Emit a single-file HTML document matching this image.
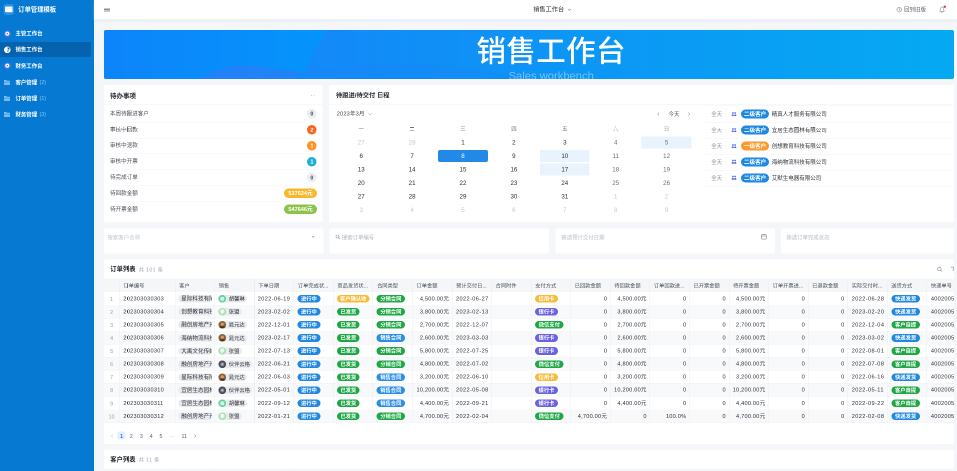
<!DOCTYPE html><html lang="zh-CN"><head><meta charset="utf-8"><title>销售工作台</title><style>
*{box-sizing:border-box;margin:0;padding:0}
html,body{width:957px;height:471px;overflow:hidden;background:#f4f6f9}
body{font-family:"Liberation Sans","Noto Sans CJK SC",sans-serif;color:#2b2f36;position:relative;-webkit-font-smoothing:antialiased}
.a{position:absolute;white-space:nowrap}
.t{position:absolute;white-space:nowrap;line-height:1;transform:translateY(-50%)}
.card{position:absolute;background:#fff;border-radius:2px}
.tag{position:absolute;border-radius:5px;color:#fff;font-weight:700;text-align:center;white-space:nowrap;overflow:hidden}
.b{font-weight:700}
</style></head><body><div style="position:absolute;left:0;top:0;width:1914px;height:942px;transform:scale(0.5);transform-origin:0 0;will-change:transform;overflow:hidden;background:#f4f6f9"><div style="zoom:2;position:absolute;left:0;top:0;width:957px;height:471px">
<div class="a" style="left:0px;top:0px;width:94px;height:471px;background:#067ad3;"></div>
<div class="a" style="left:3.5px;top:4.2px;width:10.6px;height:10.6px;background:#2a90e0;border-radius:2.5px"></div>
<svg class="a" style="left:5px;top:6.6px" width="7.6" height="5.8" viewBox="0 0 76 58"><rect x="0" y="0" width="76" height="58" rx="10" fill="#fff"/><rect x="0" y="12" width="76" height="8" fill="#cfe6fa"/></svg>
<div class="t" style="top:9.6px;font-size:6.3px;color:#fff;left:18.3px;font-weight:700;">订单管理模板</div>
<div class="a" style="left:0px;top:41.8px;width:91px;height:15.4px;background:#0562ae;border-radius:0 2px 2px 0"></div>
<svg class="a" style="left:3.8px;top:30.400000000000002px" width="6.6" height="6.6" viewBox="0 0 66 66"><circle cx="33" cy="33" r="33" fill="#5577f5"/><circle cx="33" cy="31" r="20" fill="#fff"/><circle cx="33" cy="31" r="7" fill="#4f6ff2"/></svg>
<div class="t" style="top:33.7px;font-size:5.4px;color:#fff;left:15.5px;font-weight:700;">主管工作台</div>
<svg class="a" style="left:3.8px;top:46.400000000000006px" width="6.6" height="6.6" viewBox="0 0 66 66"><circle cx="33" cy="33" r="33" fill="#fff"/><path d="M36 30 L36 8 A22 22 0 0 1 58 30 Z" fill="#0b60ab"/><path d="M30 36 L52 36 A22 22 0 0 1 30 58 Z" fill="#7fb3e0"/></svg>
<div class="t" style="top:49.7px;font-size:5.4px;color:#fff;left:15.5px;font-weight:700;">销售工作台</div>
<svg class="a" style="left:3.8px;top:62.7px" width="6.6" height="6.6" viewBox="0 0 66 66"><circle cx="33" cy="33" r="33" fill="#5577f5"/><circle cx="33" cy="31" r="20" fill="#fff"/><circle cx="33" cy="31" r="7" fill="#4f6ff2"/></svg>
<div class="t" style="top:66.0px;font-size:5.4px;color:#fff;left:15.5px;font-weight:700;">财务工作台</div>
<svg class="a" style="left:4px;top:79.80000000000001px" width="6.2" height="5.2" viewBox="0 0 62 52"><path d="M0 4 a4 4 0 0 1 4 -4 h18 l6 8 h30 a4 4 0 0 1 4 4 v6 h-62z" fill="#8fc3ee"/><rect x="0" y="22" width="62" height="30" rx="4" fill="#7db9ea"/></svg>
<div class="t" style="top:82.4px;font-size:5.4px;color:#fff;left:15.5px;font-weight:700;">客户管理</div>
<div class="t" style="top:82.4px;font-size:5.2px;color:#8cc3ee;left:39.6px;">(2)</div>
<svg class="a" style="left:4px;top:95.9px" width="6.2" height="5.2" viewBox="0 0 62 52"><path d="M0 4 a4 4 0 0 1 4 -4 h18 l6 8 h30 a4 4 0 0 1 4 4 v6 h-62z" fill="#8fc3ee"/><rect x="0" y="22" width="62" height="30" rx="4" fill="#7db9ea"/></svg>
<div class="t" style="top:98.5px;font-size:5.4px;color:#fff;left:15.5px;font-weight:700;">订单管理</div>
<div class="t" style="top:98.5px;font-size:5.2px;color:#8cc3ee;left:39.6px;">(1)</div>
<svg class="a" style="left:4px;top:112.0px" width="6.2" height="5.2" viewBox="0 0 62 52"><path d="M0 4 a4 4 0 0 1 4 -4 h18 l6 8 h30 a4 4 0 0 1 4 4 v6 h-62z" fill="#8fc3ee"/><rect x="0" y="22" width="62" height="30" rx="4" fill="#7db9ea"/></svg>
<div class="t" style="top:114.6px;font-size:5.4px;color:#fff;left:15.5px;font-weight:700;">财务管理</div>
<div class="t" style="top:114.6px;font-size:5.2px;color:#8cc3ee;left:39.6px;">(3)</div>
<div class="a" style="left:94px;top:0px;width:863px;height:19.5px;background:#fff;box-shadow:0 1px 2px rgba(200,215,230,.5)"></div>
<div class="a" style="left:104px;top:7.8px;width:5.8px;height:0.9px;background:#8a8f98;"></div>
<div class="a" style="left:104px;top:9.2px;width:5.8px;height:0.9px;background:#8a8f98;"></div>
<div class="a" style="left:104px;top:10.6px;width:5.8px;height:0.9px;background:#8a8f98;"></div>
<div class="t" style="top:9.7px;font-size:6.2px;color:#2b2f36;left:533.2px;">销售工作台</div>
<svg class="a" style="left:567.5px;top:8.6px" width="4" height="2.6" viewBox="0 0 40 26"><path d="M4 4 L20 20 L36 4" stroke="#8a8f98" stroke-width="6" fill="none"/></svg>
<svg class="a" style="left:896.5px;top:6.9px" width="5.4" height="5.4" viewBox="0 0 54 54"><circle cx="27" cy="27" r="23" stroke="#5a5f68" stroke-width="5" fill="none"/><path d="M27 12 V28 L37 34" stroke="#5a5f68" stroke-width="5" fill="none"/></svg>
<div class="t" style="top:9.6px;font-size:5.5px;color:#5a5f68;left:904px;">回到旧版</div>
<svg class="a" style="left:938.5px;top:5.8px" width="7" height="7.6" viewBox="0 0 70 76"><path d="M12 56 C18 48 16 36 18 28 C20 16 27 10 35 10 C43 10 50 16 52 28 C54 36 52 48 58 56 Z" stroke="#70757e" stroke-width="5" fill="none" stroke-linejoin="round"/><path d="M28 66 H42" stroke="#70757e" stroke-width="5"/></svg>
<div class="a" style="left:943.4px;top:5.4px;width:2.4px;height:2.4px;background:#f03a3a;border-radius:50%"></div>
<div class="a" style="left:104px;top:29.8px;width:850px;height:49.2px;border-radius:2px;overflow:hidden;background:linear-gradient(90deg,#1389f8 0%,#1389f8 24%,#0b98f5 60%,#05a9f2 100%)"><svg class="a" style="left:0;top:0" width="850" height="49.2" viewBox="0 0 850 49.2"><defs><linearGradient id="lg1" x1="0" x2="1"><stop offset="0" stop-color="#0d84fa"/><stop offset="1" stop-color="#0494fb"/></linearGradient></defs><path d="M0 0 H222 L196 49.2 H0 Z" fill="url(#lg1)"/><path d="M93 49.2 C110 40 125 35.5 140 35.5 C160 35.5 175 41 196 41 L192 49.2 Z" fill="#2b7df3" opacity=".7"/><path d="M196 41 C240 41 300 20 420 49.2 L192 49.2 Z" fill="#1c86f6" opacity=".3"/></svg><div class="a" style="left:447.2px;top:40.8px;width:200px;margin-left:-100px;text-align:center;font-size:11.2px;line-height:1;color:rgba(255,255,255,.42)">Sales workbench</div></div>
<div class="t" style="top:51.3px;font-size:29.5px;color:#fff;left:0px;left:451.2px;width:200px;text-align:center;font-weight:500;letter-spacing:0.4px;">销售工作台</div>
<div class="card" style="left:103.8px;top:85px;width:218.8px;height:137px"></div>
<div class="t" style="top:95.5px;font-size:6.5px;color:#23272e;left:110px;font-weight:700;">待办事项</div>
<div class="a" style="left:311.2px;top:94.8px;width:0.8px;height:0.8px;background:#8a8f98;border-radius:50%"></div>
<div class="a" style="left:312.8px;top:94.8px;width:0.8px;height:0.8px;background:#8a8f98;border-radius:50%"></div>
<div class="a" style="left:314.4px;top:94.8px;width:0.8px;height:0.8px;background:#8a8f98;border-radius:50%"></div>
<div class="a" style="left:103.8px;top:103.8px;width:218.8px;height:0.5px;background:#eef0f3;"></div>
<div class="t" style="top:113.9px;font-size:5.55px;color:#4a4f58;left:110px;">本周待跟进客户</div>
<div class="a" style="left:110px;top:121.9px;width:206px;height:0.4px;background:#f3f4f6;"></div>
<div class="tag" style="left:307.2px;top:109.2px;width:9.4px;height:9.4px;line-height:9.4px;border-radius:50%;background:#eef0f3;color:#3a3f48;font-size:5.4px;border:0.5px solid #e0e3e8;line-height:8.4px">0</div>
<div class="t" style="top:129.8px;font-size:5.55px;color:#4a4f58;left:110px;">审核中回款</div>
<div class="a" style="left:110px;top:137.8px;width:206px;height:0.4px;background:#f3f4f6;"></div>
<div class="tag" style="left:307.2px;top:125.10000000000001px;width:9.4px;height:9.4px;line-height:9.4px;border-radius:50%;background:#f26a1e;font-size:5.6px">2</div>
<div class="t" style="top:145.70000000000002px;font-size:5.55px;color:#4a4f58;left:110px;">审核中退款</div>
<div class="a" style="left:110px;top:153.70000000000002px;width:206px;height:0.4px;background:#f3f4f6;"></div>
<div class="tag" style="left:307.2px;top:141.00000000000003px;width:9.4px;height:9.4px;line-height:9.4px;border-radius:50%;background:#ff9220;font-size:5.6px">1</div>
<div class="t" style="top:161.60000000000002px;font-size:5.55px;color:#4a4f58;left:110px;">审核中开票</div>
<div class="a" style="left:110px;top:169.60000000000002px;width:206px;height:0.4px;background:#f3f4f6;"></div>
<div class="tag" style="left:307.2px;top:156.90000000000003px;width:9.4px;height:9.4px;line-height:9.4px;border-radius:50%;background:#1fb0d9;font-size:5.6px">1</div>
<div class="t" style="top:177.5px;font-size:5.55px;color:#4a4f58;left:110px;">待完成订单</div>
<div class="a" style="left:110px;top:185.5px;width:206px;height:0.4px;background:#f3f4f6;"></div>
<div class="tag" style="left:307.2px;top:172.8px;width:9.4px;height:9.4px;line-height:9.4px;border-radius:50%;background:#eef0f3;color:#3a3f48;font-size:5.4px;border:0.5px solid #e0e3e8;line-height:8.4px">0</div>
<div class="t" style="top:193.4px;font-size:5.55px;color:#4a4f58;left:110px;">待回款金额</div>
<div class="a" style="left:110px;top:201.4px;width:206px;height:0.4px;background:#f3f4f6;"></div>
<div class="tag" style="left:284px;top:188.70000000000002px;width:33px;height:9.4px;line-height:9.4px;background:#f9b72d;font-size:5.6px;color:#fff;">537624元</div>
<div class="t" style="top:209.3px;font-size:5.55px;color:#4a4f58;left:110px;">待开票金额</div>
<div class="tag" style="left:284px;top:204.60000000000002px;width:33px;height:9.4px;line-height:9.4px;background:#8cc34a;font-size:5.6px;color:#fff;">547646元</div>
<div class="card" style="left:329.2px;top:85px;width:624.8px;height:137px"></div>
<div class="t" style="top:95.5px;font-size:6.25px;color:#23272e;left:336px;font-weight:700;">待跟进/待交付 日程</div>
<div class="a" style="left:329.2px;top:103.8px;width:624.8px;height:0.5px;background:#eef0f3;"></div>
<div class="t" style="top:114px;font-size:5.6px;color:#3a3f48;left:336.8px;letter-spacing:0.15px;">2023年3月</div>
<svg class="a" style="left:368px;top:113px" width="4" height="2.6" viewBox="0 0 40 26"><path d="M4 4 L20 20 L36 4" stroke="#8a8f98" stroke-width="5" fill="none"/></svg>
<svg class="a" style="left:657.2px;top:112px" width="2.4" height="4" viewBox="0 0 24 40"><path d="M20 4 L6 20 L20 36" stroke="#6a6f78" stroke-width="5" fill="none"/></svg>
<div class="t" style="top:114px;font-size:5.5px;color:#4a4f58;left:668.5px;">今天</div>
<svg class="a" style="left:688.2px;top:112px" width="2.4" height="4" viewBox="0 0 24 40"><path d="M4 4 L18 20 L4 36" stroke="#6a6f78" stroke-width="5" fill="none"/></svg>
<div class="t" style="top:128.8px;font-size:5.4px;color:#6a6f78;left:0px;left:351.2px;width:20px;text-align:center;">一</div>
<div class="t" style="top:128.8px;font-size:5.4px;color:#6a6f78;left:0px;left:402.09999999999997px;width:20px;text-align:center;">二</div>
<div class="t" style="top:128.8px;font-size:5.4px;color:#6a6f78;left:0px;left:453.0px;width:20px;text-align:center;">三</div>
<div class="t" style="top:128.8px;font-size:5.4px;color:#6a6f78;left:0px;left:503.9px;width:20px;text-align:center;">四</div>
<div class="t" style="top:128.8px;font-size:5.4px;color:#6a6f78;left:0px;left:554.8px;width:20px;text-align:center;">五</div>
<div class="t" style="top:128.8px;font-size:5.4px;color:#9aa0a8;left:0px;left:605.7px;width:20px;text-align:center;">六</div>
<div class="t" style="top:128.8px;font-size:5.4px;color:#9aa0a8;left:0px;left:656.5999999999999px;width:20px;text-align:center;">日</div>
<div class="t" style="top:142.5px;font-size:6.2px;color:#c4c8ce;left:0px;left:351.2px;width:20px;text-align:center;">27</div>
<div class="t" style="top:142.5px;font-size:6.2px;color:#c4c8ce;left:0px;left:402.09999999999997px;width:20px;text-align:center;">28</div>
<div class="t" style="top:142.5px;font-size:6.2px;color:#2b2f36;left:0px;left:453.0px;width:20px;text-align:center;">1</div>
<div class="t" style="top:142.5px;font-size:6.2px;color:#2b2f36;left:0px;left:503.9px;width:20px;text-align:center;">2</div>
<div class="t" style="top:142.5px;font-size:6.2px;color:#2b2f36;left:0px;left:554.8px;width:20px;text-align:center;">3</div>
<div class="t" style="top:142.5px;font-size:6.2px;color:#6a6f78;left:0px;left:605.7px;width:20px;text-align:center;">4</div>
<div class="a" style="left:641.6999999999999px;top:136.5px;width:49.8px;height:12px;background:#e8f3fd;border-radius:1px"></div>
<div class="t" style="top:142.5px;font-size:6.2px;color:#6a6f78;left:0px;left:656.5999999999999px;width:20px;text-align:center;">5</div>
<div class="t" style="top:156.0px;font-size:6.2px;color:#2b2f36;left:0px;left:351.2px;width:20px;text-align:center;">6</div>
<div class="t" style="top:156.0px;font-size:6.2px;color:#2b2f36;left:0px;left:402.09999999999997px;width:20px;text-align:center;">7</div>
<div class="a" style="left:438.1px;top:149.9px;width:49.8px;height:12.2px;background:#2289e6;border-radius:2px"></div>
<div class="t" style="top:156.0px;font-size:6.2px;color:#fff;left:0px;left:453.0px;width:20px;text-align:center;">8</div>
<div class="t" style="top:156.0px;font-size:6.2px;color:#2b2f36;left:0px;left:503.9px;width:20px;text-align:center;">9</div>
<div class="a" style="left:539.9px;top:150.0px;width:49.8px;height:12px;background:#e8f3fd;border-radius:1px"></div>
<div class="t" style="top:156.0px;font-size:6.2px;color:#2b2f36;left:0px;left:554.8px;width:20px;text-align:center;">10</div>
<div class="t" style="top:156.0px;font-size:6.2px;color:#6a6f78;left:0px;left:605.7px;width:20px;text-align:center;">11</div>
<div class="t" style="top:156.0px;font-size:6.2px;color:#6a6f78;left:0px;left:656.5999999999999px;width:20px;text-align:center;">12</div>
<div class="t" style="top:169.5px;font-size:6.2px;color:#2b2f36;left:0px;left:351.2px;width:20px;text-align:center;">13</div>
<div class="t" style="top:169.5px;font-size:6.2px;color:#2b2f36;left:0px;left:402.09999999999997px;width:20px;text-align:center;">14</div>
<div class="t" style="top:169.5px;font-size:6.2px;color:#2b2f36;left:0px;left:453.0px;width:20px;text-align:center;">15</div>
<div class="t" style="top:169.5px;font-size:6.2px;color:#2b2f36;left:0px;left:503.9px;width:20px;text-align:center;">16</div>
<div class="a" style="left:539.9px;top:163.5px;width:49.8px;height:12px;background:#e8f3fd;border-radius:1px"></div>
<div class="t" style="top:169.5px;font-size:6.2px;color:#2b2f36;left:0px;left:554.8px;width:20px;text-align:center;">17</div>
<div class="t" style="top:169.5px;font-size:6.2px;color:#6a6f78;left:0px;left:605.7px;width:20px;text-align:center;">18</div>
<div class="t" style="top:169.5px;font-size:6.2px;color:#6a6f78;left:0px;left:656.5999999999999px;width:20px;text-align:center;">19</div>
<div class="t" style="top:183.0px;font-size:6.2px;color:#2b2f36;left:0px;left:351.2px;width:20px;text-align:center;">20</div>
<div class="t" style="top:183.0px;font-size:6.2px;color:#2b2f36;left:0px;left:402.09999999999997px;width:20px;text-align:center;">21</div>
<div class="t" style="top:183.0px;font-size:6.2px;color:#2b2f36;left:0px;left:453.0px;width:20px;text-align:center;">22</div>
<div class="t" style="top:183.0px;font-size:6.2px;color:#2b2f36;left:0px;left:503.9px;width:20px;text-align:center;">23</div>
<div class="t" style="top:183.0px;font-size:6.2px;color:#2b2f36;left:0px;left:554.8px;width:20px;text-align:center;">24</div>
<div class="t" style="top:183.0px;font-size:6.2px;color:#6a6f78;left:0px;left:605.7px;width:20px;text-align:center;">25</div>
<div class="t" style="top:183.0px;font-size:6.2px;color:#6a6f78;left:0px;left:656.5999999999999px;width:20px;text-align:center;">26</div>
<div class="t" style="top:196.5px;font-size:6.2px;color:#2b2f36;left:0px;left:351.2px;width:20px;text-align:center;">27</div>
<div class="t" style="top:196.5px;font-size:6.2px;color:#2b2f36;left:0px;left:402.09999999999997px;width:20px;text-align:center;">28</div>
<div class="t" style="top:196.5px;font-size:6.2px;color:#2b2f36;left:0px;left:453.0px;width:20px;text-align:center;">29</div>
<div class="t" style="top:196.5px;font-size:6.2px;color:#2b2f36;left:0px;left:503.9px;width:20px;text-align:center;">30</div>
<div class="t" style="top:196.5px;font-size:6.2px;color:#2b2f36;left:0px;left:554.8px;width:20px;text-align:center;">31</div>
<div class="t" style="top:196.5px;font-size:6.2px;color:#c4c8ce;left:0px;left:605.7px;width:20px;text-align:center;">1</div>
<div class="t" style="top:196.5px;font-size:6.2px;color:#c4c8ce;left:0px;left:656.5999999999999px;width:20px;text-align:center;">2</div>
<div class="t" style="top:210.0px;font-size:6.2px;color:#c4c8ce;left:0px;left:351.2px;width:20px;text-align:center;">3</div>
<div class="t" style="top:210.0px;font-size:6.2px;color:#c4c8ce;left:0px;left:402.09999999999997px;width:20px;text-align:center;">4</div>
<div class="t" style="top:210.0px;font-size:6.2px;color:#c4c8ce;left:0px;left:453.0px;width:20px;text-align:center;">5</div>
<div class="t" style="top:210.0px;font-size:6.2px;color:#c4c8ce;left:0px;left:503.9px;width:20px;text-align:center;">6</div>
<div class="t" style="top:210.0px;font-size:6.2px;color:#c4c8ce;left:0px;left:554.8px;width:20px;text-align:center;">7</div>
<div class="t" style="top:210.0px;font-size:6.2px;color:#c4c8ce;left:0px;left:605.7px;width:20px;text-align:center;">8</div>
<div class="t" style="top:210.0px;font-size:6.2px;color:#c4c8ce;left:0px;left:656.5999999999999px;width:20px;text-align:center;">9</div>
<div class="a" style="left:705.5px;top:105.2px;width:246.5px;height:0.5px;background:#f0f2f4;"></div>
<div class="t" style="top:114.1px;font-size:5.4px;color:#8a8f98;left:711.2px;">全天</div>
<svg class="a" style="left:731.3px;top:111.89999999999999px" width="5" height="4.2" viewBox="0 0 50 42"><circle cx="14" cy="10" r="8.5" fill="#4468e0"/><circle cx="36" cy="10" r="8.5" fill="#4468e0"/><path d="M1 42 C1 30 6 24 14 24 C20 24 23 28 23.5 42 Z M26.5 42 C27 28 30 24 36 24 C44 24 49 30 49 42 Z" fill="#4468e0"/></svg>
<div class="tag" style="left:741.2px;top:109.6px;width:27.8px;height:9px;line-height:9px;background:#1e88e5;font-size:5.6px;color:#fff;">二级客户</div>
<div class="t" style="top:114.1px;font-size:5.5px;color:#2b2f36;left:771.8px;">精真人才服务有限公司</div>
<div class="a" style="left:705.5px;top:122.1px;width:246.5px;height:0.5px;background:#f0f2f4;"></div>
<div class="t" style="top:130.03px;font-size:5.4px;color:#8a8f98;left:711.2px;">全天</div>
<svg class="a" style="left:731.3px;top:127.83px" width="5" height="4.2" viewBox="0 0 50 42"><circle cx="14" cy="10" r="8.5" fill="#4468e0"/><circle cx="36" cy="10" r="8.5" fill="#4468e0"/><path d="M1 42 C1 30 6 24 14 24 C20 24 23 28 23.5 42 Z M26.5 42 C27 28 30 24 36 24 C44 24 49 30 49 42 Z" fill="#4468e0"/></svg>
<div class="tag" style="left:741.2px;top:125.53px;width:27.8px;height:9px;line-height:9px;background:#1e88e5;font-size:5.6px;color:#fff;">二级客户</div>
<div class="t" style="top:130.03px;font-size:5.5px;color:#2b2f36;left:771.8px;">宜居生态园林有限公司</div>
<div class="a" style="left:705.5px;top:138.03px;width:246.5px;height:0.5px;background:#f0f2f4;"></div>
<div class="t" style="top:145.95999999999998px;font-size:5.4px;color:#8a8f98;left:711.2px;">全天</div>
<svg class="a" style="left:731.3px;top:143.76px" width="5" height="4.2" viewBox="0 0 50 42"><circle cx="14" cy="10" r="8.5" fill="#4468e0"/><circle cx="36" cy="10" r="8.5" fill="#4468e0"/><path d="M1 42 C1 30 6 24 14 24 C20 24 23 28 23.5 42 Z M26.5 42 C27 28 30 24 36 24 C44 24 49 30 49 42 Z" fill="#4468e0"/></svg>
<div class="tag" style="left:741.2px;top:141.45999999999998px;width:27.8px;height:9px;line-height:9px;background:#ff972b;font-size:5.6px;color:#fff;">一级客户</div>
<div class="t" style="top:145.95999999999998px;font-size:5.5px;color:#2b2f36;left:771.8px;">创想教育科技有限公司</div>
<div class="a" style="left:705.5px;top:153.95999999999998px;width:246.5px;height:0.5px;background:#f0f2f4;"></div>
<div class="t" style="top:161.89px;font-size:5.4px;color:#8a8f98;left:711.2px;">全天</div>
<svg class="a" style="left:731.3px;top:159.69px" width="5" height="4.2" viewBox="0 0 50 42"><circle cx="14" cy="10" r="8.5" fill="#4468e0"/><circle cx="36" cy="10" r="8.5" fill="#4468e0"/><path d="M1 42 C1 30 6 24 14 24 C20 24 23 28 23.5 42 Z M26.5 42 C27 28 30 24 36 24 C44 24 49 30 49 42 Z" fill="#4468e0"/></svg>
<div class="tag" style="left:741.2px;top:157.39px;width:27.8px;height:9px;line-height:9px;background:#1e88e5;font-size:5.6px;color:#fff;">二级客户</div>
<div class="t" style="top:161.89px;font-size:5.5px;color:#2b2f36;left:771.8px;">海纳物流科技有限公司</div>
<div class="a" style="left:705.5px;top:169.89px;width:246.5px;height:0.5px;background:#f0f2f4;"></div>
<div class="t" style="top:177.82px;font-size:5.4px;color:#8a8f98;left:711.2px;">全天</div>
<svg class="a" style="left:731.3px;top:175.62px" width="5" height="4.2" viewBox="0 0 50 42"><circle cx="14" cy="10" r="8.5" fill="#4468e0"/><circle cx="36" cy="10" r="8.5" fill="#4468e0"/><path d="M1 42 C1 30 6 24 14 24 C20 24 23 28 23.5 42 Z M26.5 42 C27 28 30 24 36 24 C44 24 49 30 49 42 Z" fill="#4468e0"/></svg>
<div class="tag" style="left:741.2px;top:173.32px;width:27.8px;height:9px;line-height:9px;background:#1e88e5;font-size:5.6px;color:#fff;">二级客户</div>
<div class="t" style="top:177.82px;font-size:5.5px;color:#2b2f36;left:771.8px;">艾默生电器有限公司</div>
<div class="a" style="left:705.5px;top:185.82px;width:246.5px;height:0.5px;background:#f0f2f4;"></div>
<div class="card" style="left:103.8px;top:228.3px;width:219.6px;height:25px"></div>
<div class="card" style="left:329.4px;top:228.3px;width:219.6px;height:25px"></div>
<div class="card" style="left:555.3px;top:228.3px;width:219.6px;height:25px"></div>
<div class="card" style="left:780.9px;top:228.3px;width:173.1px;height:25px"></div>
<div class="t" style="top:237.3px;font-size:5.5px;color:#c4c8ce;left:107.3px;">搜索客户名称</div>
<svg class="a" style="left:311.6px;top:236px" width="3.4" height="2.2" viewBox="0 0 34 22"><path d="M2 2 L17 18 L32 2 Z" fill="#9aa0a8"/></svg>
<svg class="a" style="left:335.5px;top:234.3px" width="5" height="5" viewBox="0 0 50 50"><circle cx="20" cy="20" r="15" stroke="#9aa0a8" stroke-width="6" fill="none"/><path d="M31 31 L46 46" stroke="#9aa0a8" stroke-width="7"/></svg>
<div class="t" style="top:237.3px;font-size:5.4px;color:#b4b9c0;left:341.8px;">搜索订单编号</div>
<div class="t" style="top:237.3px;font-size:5.4px;color:#b8bcc3;left:561.3px;">筛选预计交付日期</div>
<svg class="a" style="left:761.2px;top:234px" width="5.6" height="5.4" viewBox="0 0 56 54"><rect x="3" y="6" width="50" height="45" rx="6" stroke="#6a6f78" stroke-width="5" fill="none"/><path d="M3 20 H53" stroke="#6a6f78" stroke-width="5"/><path d="M16 0 V10 M40 0 V10" stroke="#6a6f78" stroke-width="5"/></svg>
<div class="t" style="top:237.3px;font-size:5.4px;color:#b8bcc3;left:786.3px;">筛选订单完成状态</div>
<div class="card" style="left:103.8px;top:259.6px;width:850.2px;height:184.4px"></div>
<div class="t" style="top:269.2px;font-size:6.3px;color:#23272e;left:110.3px;font-weight:700;">订单列表</div>
<div class="t" style="top:269.3px;font-size:5.3px;color:#a0a5ad;left:138.6px;letter-spacing:0.35px;">共 101 条</div>
<svg class="a" style="left:937px;top:266.3px" width="5.6" height="5.6" viewBox="0 0 56 56"><circle cx="24" cy="24" r="18" stroke="#5a5f68" stroke-width="5" fill="none"/><path d="M37 37 L52 52" stroke="#5a5f68" stroke-width="5"/></svg>
<svg class="a" style="left:950.5px;top:266.3px" width="3.5" height="5.6" viewBox="0 0 35 56"><path d="M4 6 H40 L26 26 V46" stroke="#5a5f68" stroke-width="5" fill="none"/></svg>
<div class="a" style="left:103.8px;top:278.6px;width:850.2px;height:165.4px;overflow:hidden">
<div class="a" style="left:0.0px;top:0.0px;width:850.2px;height:13.4px;background:#f5f6f8;"></div>
<div class="a" style="left:0.0px;top:26.20999999999998px;width:850.2px;height:0.5px;background:#eef0f3;"></div>
<div class="a" style="left:0.0px;top:26.45999999999998px;width:850.2px;height:13.06px;background:#f8f9fa;"></div>
<div class="a" style="left:0.0px;top:39.26999999999998px;width:850.2px;height:0.5px;background:#eef0f3;"></div>
<div class="a" style="left:0.0px;top:52.329999999999984px;width:850.2px;height:0.5px;background:#eef0f3;"></div>
<div class="a" style="left:0.0px;top:52.579999999999984px;width:850.2px;height:13.06px;background:#f8f9fa;"></div>
<div class="a" style="left:0.0px;top:65.38999999999999px;width:850.2px;height:0.5px;background:#eef0f3;"></div>
<div class="a" style="left:0.0px;top:78.44999999999999px;width:850.2px;height:0.5px;background:#eef0f3;"></div>
<div class="a" style="left:0.0px;top:78.69999999999999px;width:850.2px;height:13.06px;background:#f8f9fa;"></div>
<div class="a" style="left:0.0px;top:91.50999999999999px;width:850.2px;height:0.5px;background:#eef0f3;"></div>
<div class="a" style="left:0.0px;top:104.57px;width:850.2px;height:0.5px;background:#eef0f3;"></div>
<div class="a" style="left:0.0px;top:104.82px;width:850.2px;height:13.06px;background:#f8f9fa;"></div>
<div class="a" style="left:0.0px;top:117.63px;width:850.2px;height:0.5px;background:#eef0f3;"></div>
<div class="a" style="left:0.0px;top:130.69px;width:850.2px;height:0.5px;background:#eef0f3;"></div>
<div class="a" style="left:0.0px;top:130.94px;width:850.2px;height:13.06px;background:#f8f9fa;"></div>
<div class="a" style="left:0.0px;top:143.75px;width:850.2px;height:0.5px;background:#eef0f3;"></div>
<div class="a" style="left:15.350000000000009px;top:0.0px;width:0.5px;height:144.4px;background:#eceef1;"></div>
<div class="a" style="left:71.14999999999999px;top:0.0px;width:0.5px;height:144.4px;background:#eceef1;"></div>
<div class="a" style="left:110.71px;top:0.0px;width:0.5px;height:144.4px;background:#eceef1;"></div>
<div class="a" style="left:150.26999999999998px;top:0.0px;width:0.5px;height:144.4px;background:#eceef1;"></div>
<div class="a" style="left:189.82999999999998px;top:0.0px;width:0.5px;height:144.4px;background:#eceef1;"></div>
<div class="a" style="left:229.39px;top:0.0px;width:0.5px;height:144.4px;background:#eceef1;"></div>
<div class="a" style="left:268.95px;top:0.0px;width:0.5px;height:144.4px;background:#eceef1;"></div>
<div class="a" style="left:308.51px;top:0.0px;width:0.5px;height:144.4px;background:#eceef1;"></div>
<div class="a" style="left:348.07px;top:0.0px;width:0.5px;height:144.4px;background:#eceef1;"></div>
<div class="a" style="left:387.63px;top:0.0px;width:0.5px;height:144.4px;background:#eceef1;"></div>
<div class="a" style="left:427.19px;top:0.0px;width:0.5px;height:144.4px;background:#eceef1;"></div>
<div class="a" style="left:466.74999999999994px;top:0.0px;width:0.5px;height:144.4px;background:#eceef1;"></div>
<div class="a" style="left:506.31px;top:0.0px;width:0.5px;height:144.4px;background:#eceef1;"></div>
<div class="a" style="left:545.8700000000001px;top:0.0px;width:0.5px;height:144.4px;background:#eceef1;"></div>
<div class="a" style="left:585.4300000000001px;top:0.0px;width:0.5px;height:144.4px;background:#eceef1;"></div>
<div class="a" style="left:624.99px;top:0.0px;width:0.5px;height:144.4px;background:#eceef1;"></div>
<div class="a" style="left:664.5500000000002px;top:0.0px;width:0.5px;height:144.4px;background:#eceef1;"></div>
<div class="a" style="left:704.1100000000001px;top:0.0px;width:0.5px;height:144.4px;background:#eceef1;"></div>
<div class="a" style="left:743.6700000000001px;top:0.0px;width:0.5px;height:144.4px;background:#eceef1;"></div>
<div class="a" style="left:783.23px;top:0.0px;width:0.5px;height:144.4px;background:#eceef1;"></div>
<div class="a" style="left:822.7900000000002px;top:0.0px;width:0.5px;height:144.4px;background:#eceef1;"></div>
<div class="t" style="top:6.899999999999977px;font-size:5.25px;color:#4a4f58;left:19.60000000000001px;">订单编号</div>
<div class="t" style="top:6.899999999999977px;font-size:5.25px;color:#4a4f58;left:75.39999999999999px;">客户</div>
<div class="t" style="top:6.899999999999977px;font-size:5.25px;color:#4a4f58;left:114.96px;">销售</div>
<div class="t" style="top:6.899999999999977px;font-size:5.25px;color:#4a4f58;left:154.51999999999998px;">下单日期</div>
<div class="t" style="top:6.899999999999977px;font-size:5.25px;color:#4a4f58;left:194.07999999999998px;">订单完成状...</div>
<div class="t" style="top:6.899999999999977px;font-size:5.25px;color:#4a4f58;left:233.64px;">商品发货状...</div>
<div class="t" style="top:6.899999999999977px;font-size:5.25px;color:#4a4f58;left:273.2px;">合同类型</div>
<div class="t" style="top:6.899999999999977px;font-size:5.25px;color:#4a4f58;left:312.76px;">订单金额</div>
<div class="t" style="top:6.899999999999977px;font-size:5.25px;color:#4a4f58;left:352.32px;">预计交付日...</div>
<div class="t" style="top:6.899999999999977px;font-size:5.25px;color:#4a4f58;left:391.88px;">合同附件</div>
<div class="t" style="top:6.899999999999977px;font-size:5.25px;color:#4a4f58;left:431.44px;">支付方式</div>
<div class="t" style="top:6.899999999999977px;font-size:5.25px;color:#4a4f58;left:470.99999999999994px;">已回款金额</div>
<div class="t" style="top:6.899999999999977px;font-size:5.25px;color:#4a4f58;left:510.56px;">待回款金额</div>
<div class="t" style="top:6.899999999999977px;font-size:5.25px;color:#4a4f58;left:550.1200000000001px;">订单回款进...</div>
<div class="t" style="top:6.899999999999977px;font-size:5.25px;color:#4a4f58;left:589.6800000000001px;">已开票金额</div>
<div class="t" style="top:6.899999999999977px;font-size:5.25px;color:#4a4f58;left:629.24px;">待开票金额</div>
<div class="t" style="top:6.899999999999977px;font-size:5.25px;color:#4a4f58;left:668.8000000000002px;">订单开票进...</div>
<div class="t" style="top:6.899999999999977px;font-size:5.25px;color:#4a4f58;left:708.3600000000001px;">已退款金额</div>
<div class="t" style="top:6.899999999999977px;font-size:5.25px;color:#4a4f58;left:747.9200000000001px;">实际交付时...</div>
<div class="t" style="top:6.899999999999977px;font-size:5.25px;color:#4a4f58;left:787.48px;">送货方式</div>
<div class="t" style="top:6.899999999999977px;font-size:5.25px;color:#4a4f58;left:827.0400000000002px;">快递单号</div>
<div class="t" style="top:20.19999999999999px;font-size:5.3px;color:#9aa0a8;left:-103.8px;left:-0.20000000000000284px;width:16px;text-align:center;">1</div>
<div class="t" style="top:20.19999999999999px;font-size:5.6px;color:#2b2f36;left:19.60000000000001px;letter-spacing:0.27px;">202303030303</div>
<div class="tag" style="left:74.60000000000001px;top:16.5px;width:33.6px;height:7.4px;line-height:7.4px;background:#e9ebee;color:#2b2f36;font-weight:400;font-size:5.6px;border-radius:3px;text-align:left;padding-left:2.8px">星际科技有限</div>
<div class="tag" style="left:114.2px;top:16.5px;width:29px;height:7.4px;line-height:7.4px;background:#e9ebee;color:#2b2f36;font-weight:400;font-size:5.3px;border-radius:4px;text-align:left;padding-left:10.8px">胡馨琳</div>
<svg class="a" style="left:114.60000000000001px;top:16.399999999999977px" width="7.6" height="7.6" viewBox="0 0 70 70"><circle cx="35" cy="35" r="35" fill="#5ed39a"/><rect x="17" y="17" width="36" height="36" rx="10" fill="#d4f5e3"/></svg>
<div class="t" style="top:20.19999999999999px;font-size:5.6px;color:#2b2f36;left:153.89999999999998px;letter-spacing:0.4px;">2022-06-19</div>
<div class="tag" style="left:193.5px;top:16.399999999999977px;width:23.2px;height:7.6px;line-height:7.6px;background:#2087e2;font-size:5.3px;color:#fff;">进行中</div>
<div class="tag" style="left:233.2px;top:16.399999999999977px;width:32.5px;height:7.6px;line-height:7.6px;background:#f8ba37;font-size:5.3px;color:#fff;">客户确认收</div>
<div class="tag" style="left:272.7px;top:16.399999999999977px;width:28.6px;height:7.6px;line-height:7.6px;background:#1fa745;font-size:5.3px;color:#fff;">分销合同</div>
<div class="t" style="top:20.19999999999999px;font-size:5.6px;color:#2b2f36;right:504.8px;letter-spacing:0.22px;">4,500.00元</div>
<div class="t" style="top:20.19999999999999px;font-size:5.6px;color:#2b2f36;left:352.2px;letter-spacing:0.4px;">2022-06-27</div>
<div class="tag" style="left:431.2px;top:16.399999999999977px;width:23px;height:7.6px;line-height:7.6px;background:#f8ba37;font-size:5.3px;color:#fff;">信用卡</div>
<div class="t" style="top:20.19999999999999px;font-size:5.6px;color:#2b2f36;right:346.84000000000003px;letter-spacing:0.22px;">0</div>
<div class="t" style="top:20.19999999999999px;font-size:5.6px;color:#2b2f36;right:307.28px;letter-spacing:0.22px;">4,500.00元</div>
<div class="t" style="top:20.19999999999999px;font-size:5.6px;color:#2b2f36;right:267.72px;letter-spacing:0.22px;">0</div>
<div class="t" style="top:20.19999999999999px;font-size:5.6px;color:#2b2f36;right:228.16000000000008px;letter-spacing:0.22px;">0</div>
<div class="t" style="top:20.19999999999999px;font-size:5.6px;color:#2b2f36;right:188.5999999999999px;letter-spacing:0.22px;">4,500.00元</div>
<div class="t" style="top:20.19999999999999px;font-size:5.6px;color:#2b2f36;right:149.03999999999996px;letter-spacing:0.22px;">0</div>
<div class="t" style="top:20.19999999999999px;font-size:5.6px;color:#2b2f36;right:109.48000000000002px;letter-spacing:0.22px;">0</div>
<div class="t" style="top:20.19999999999999px;font-size:5.6px;color:#2b2f36;left:747.9200000000001px;letter-spacing:0.4px;">2022-06-28</div>
<div class="tag" style="left:787.48px;top:16.399999999999977px;width:28.6px;height:7.6px;line-height:7.6px;background:#2087e2;font-size:5.3px;color:#fff;">快递发货</div>
<div class="t" style="top:20.19999999999999px;font-size:5.6px;color:#2b2f36;left:827.0400000000002px;letter-spacing:0.27px;">4002005678</div>
<div class="t" style="top:33.25999999999999px;font-size:5.3px;color:#9aa0a8;left:-103.8px;left:-0.20000000000000284px;width:16px;text-align:center;">2</div>
<div class="t" style="top:33.25999999999999px;font-size:5.6px;color:#2b2f36;left:19.60000000000001px;letter-spacing:0.27px;">202303030304</div>
<div class="tag" style="left:74.60000000000001px;top:29.560000000000002px;width:33.6px;height:7.4px;line-height:7.4px;background:#e9ebee;color:#2b2f36;font-weight:400;font-size:5.6px;border-radius:3px;text-align:left;padding-left:2.8px">创想教育科技</div>
<div class="tag" style="left:114.2px;top:29.560000000000002px;width:24px;height:7.4px;line-height:7.4px;background:#e9ebee;color:#2b2f36;font-weight:400;font-size:5.3px;border-radius:4px;text-align:left;padding-left:10.8px">张盟</div>
<svg class="a" style="left:114.60000000000001px;top:29.45999999999998px" width="7.6" height="7.6" viewBox="0 0 70 70"><circle cx="35" cy="35" r="35" fill="#a5e3b0"/><circle cx="35" cy="31" r="19" fill="#f2fbf3"/><path d="M28 46 L24 62 L42 47Z" fill="#f2fbf3"/></svg>
<div class="t" style="top:33.25999999999999px;font-size:5.6px;color:#2b2f36;left:153.89999999999998px;letter-spacing:0.4px;">2023-02-02</div>
<div class="tag" style="left:193.5px;top:29.45999999999998px;width:23.2px;height:7.6px;line-height:7.6px;background:#2087e2;font-size:5.3px;color:#fff;">进行中</div>
<div class="tag" style="left:233.2px;top:29.45999999999998px;width:22.6px;height:7.6px;line-height:7.6px;background:#1fa745;font-size:5.3px;color:#fff;">已发货</div>
<div class="tag" style="left:272.7px;top:29.45999999999998px;width:28.6px;height:7.6px;line-height:7.6px;background:#1fa745;font-size:5.3px;color:#fff;">分销合同</div>
<div class="t" style="top:33.25999999999999px;font-size:5.6px;color:#2b2f36;right:504.8px;letter-spacing:0.22px;">3,800.00元</div>
<div class="t" style="top:33.25999999999999px;font-size:5.6px;color:#2b2f36;left:352.2px;letter-spacing:0.4px;">2023-02-13</div>
<div class="tag" style="left:431.2px;top:29.45999999999998px;width:23px;height:7.6px;line-height:7.6px;background:#6a62de;font-size:5.3px;color:#fff;">银行卡</div>
<div class="t" style="top:33.25999999999999px;font-size:5.6px;color:#2b2f36;right:346.84000000000003px;letter-spacing:0.22px;">0</div>
<div class="t" style="top:33.25999999999999px;font-size:5.6px;color:#2b2f36;right:307.28px;letter-spacing:0.22px;">3,800.00元</div>
<div class="t" style="top:33.25999999999999px;font-size:5.6px;color:#2b2f36;right:267.72px;letter-spacing:0.22px;">0</div>
<div class="t" style="top:33.25999999999999px;font-size:5.6px;color:#2b2f36;right:228.16000000000008px;letter-spacing:0.22px;">0</div>
<div class="t" style="top:33.25999999999999px;font-size:5.6px;color:#2b2f36;right:188.5999999999999px;letter-spacing:0.22px;">3,800.00元</div>
<div class="t" style="top:33.25999999999999px;font-size:5.6px;color:#2b2f36;right:149.03999999999996px;letter-spacing:0.22px;">0</div>
<div class="t" style="top:33.25999999999999px;font-size:5.6px;color:#2b2f36;right:109.48000000000002px;letter-spacing:0.22px;">0</div>
<div class="t" style="top:33.25999999999999px;font-size:5.6px;color:#2b2f36;left:747.9200000000001px;letter-spacing:0.4px;">2023-02-20</div>
<div class="tag" style="left:787.48px;top:29.45999999999998px;width:28.6px;height:7.6px;line-height:7.6px;background:#2087e2;font-size:5.3px;color:#fff;">快递发货</div>
<div class="t" style="top:33.25999999999999px;font-size:5.6px;color:#2b2f36;left:827.0400000000002px;letter-spacing:0.27px;">4002005678</div>
<div class="t" style="top:46.31999999999999px;font-size:5.3px;color:#9aa0a8;left:-103.8px;left:-0.20000000000000284px;width:16px;text-align:center;">3</div>
<div class="t" style="top:46.31999999999999px;font-size:5.6px;color:#2b2f36;left:19.60000000000001px;letter-spacing:0.27px;">202303030305</div>
<div class="tag" style="left:74.60000000000001px;top:42.620000000000005px;width:33.6px;height:7.4px;line-height:7.4px;background:#e9ebee;color:#2b2f36;font-weight:400;font-size:5.6px;border-radius:3px;text-align:left;padding-left:2.8px">融创房地产开</div>
<div class="tag" style="left:114.2px;top:42.620000000000005px;width:29px;height:7.4px;line-height:7.4px;background:#e9ebee;color:#2b2f36;font-weight:400;font-size:5.3px;border-radius:4px;text-align:left;padding-left:10.8px">晁元达</div>
<svg class="a" style="left:114.60000000000001px;top:42.51999999999998px" width="7.6" height="7.6" viewBox="0 0 70 70"><circle cx="35" cy="35" r="35" fill="#8a6238"/><circle cx="35" cy="30" r="14" fill="#d9a066"/><path d="M8 58 C14 44 56 44 62 58 C54 68 16 68 8 58Z" fill="#4a3420"/></svg>
<div class="t" style="top:46.31999999999999px;font-size:5.6px;color:#2b2f36;left:153.89999999999998px;letter-spacing:0.4px;">2022-12-01</div>
<div class="tag" style="left:193.5px;top:42.51999999999998px;width:23.2px;height:7.6px;line-height:7.6px;background:#2087e2;font-size:5.3px;color:#fff;">进行中</div>
<div class="tag" style="left:233.2px;top:42.51999999999998px;width:22.6px;height:7.6px;line-height:7.6px;background:#1fa745;font-size:5.3px;color:#fff;">已发货</div>
<div class="tag" style="left:272.7px;top:42.51999999999998px;width:28.6px;height:7.6px;line-height:7.6px;background:#1fa745;font-size:5.3px;color:#fff;">分销合同</div>
<div class="t" style="top:46.31999999999999px;font-size:5.6px;color:#2b2f36;right:504.8px;letter-spacing:0.22px;">2,700.00元</div>
<div class="t" style="top:46.31999999999999px;font-size:5.6px;color:#2b2f36;left:352.2px;letter-spacing:0.4px;">2022-12-07</div>
<div class="tag" style="left:431.2px;top:42.51999999999998px;width:28.6px;height:7.6px;line-height:7.6px;background:#1fa745;font-size:5.3px;color:#fff;">微信支付</div>
<div class="t" style="top:46.31999999999999px;font-size:5.6px;color:#2b2f36;right:346.84000000000003px;letter-spacing:0.22px;">0</div>
<div class="t" style="top:46.31999999999999px;font-size:5.6px;color:#2b2f36;right:307.28px;letter-spacing:0.22px;">2,700.00元</div>
<div class="t" style="top:46.31999999999999px;font-size:5.6px;color:#2b2f36;right:267.72px;letter-spacing:0.22px;">0</div>
<div class="t" style="top:46.31999999999999px;font-size:5.6px;color:#2b2f36;right:228.16000000000008px;letter-spacing:0.22px;">0</div>
<div class="t" style="top:46.31999999999999px;font-size:5.6px;color:#2b2f36;right:188.5999999999999px;letter-spacing:0.22px;">2,700.00元</div>
<div class="t" style="top:46.31999999999999px;font-size:5.6px;color:#2b2f36;right:149.03999999999996px;letter-spacing:0.22px;">0</div>
<div class="t" style="top:46.31999999999999px;font-size:5.6px;color:#2b2f36;right:109.48000000000002px;letter-spacing:0.22px;">0</div>
<div class="t" style="top:46.31999999999999px;font-size:5.6px;color:#2b2f36;left:747.9200000000001px;letter-spacing:0.4px;">2022-12-04</div>
<div class="tag" style="left:787.48px;top:42.51999999999998px;width:28.6px;height:7.6px;line-height:7.6px;background:#1fa745;font-size:5.3px;color:#fff;">客户自提</div>
<div class="t" style="top:46.31999999999999px;font-size:5.6px;color:#2b2f36;left:827.0400000000002px;letter-spacing:0.27px;">4002005678</div>
<div class="t" style="top:59.379999999999995px;font-size:5.3px;color:#9aa0a8;left:-103.8px;left:-0.20000000000000284px;width:16px;text-align:center;">4</div>
<div class="t" style="top:59.379999999999995px;font-size:5.6px;color:#2b2f36;left:19.60000000000001px;letter-spacing:0.27px;">202303030306</div>
<div class="tag" style="left:74.60000000000001px;top:55.68000000000001px;width:33.6px;height:7.4px;line-height:7.4px;background:#e9ebee;color:#2b2f36;font-weight:400;font-size:5.6px;border-radius:3px;text-align:left;padding-left:2.8px">海纳物流科技</div>
<div class="tag" style="left:114.2px;top:55.68000000000001px;width:29px;height:7.4px;line-height:7.4px;background:#e9ebee;color:#2b2f36;font-weight:400;font-size:5.3px;border-radius:4px;text-align:left;padding-left:10.8px">晁元达</div>
<svg class="a" style="left:114.60000000000001px;top:55.579999999999984px" width="7.6" height="7.6" viewBox="0 0 70 70"><circle cx="35" cy="35" r="35" fill="#8a6238"/><circle cx="35" cy="30" r="14" fill="#d9a066"/><path d="M8 58 C14 44 56 44 62 58 C54 68 16 68 8 58Z" fill="#4a3420"/></svg>
<div class="t" style="top:59.379999999999995px;font-size:5.6px;color:#2b2f36;left:153.89999999999998px;letter-spacing:0.4px;">2023-02-17</div>
<div class="tag" style="left:193.5px;top:55.579999999999984px;width:23.2px;height:7.6px;line-height:7.6px;background:#2087e2;font-size:5.3px;color:#fff;">进行中</div>
<div class="tag" style="left:233.2px;top:55.579999999999984px;width:22.6px;height:7.6px;line-height:7.6px;background:#1fa745;font-size:5.3px;color:#fff;">已发货</div>
<div class="tag" style="left:272.7px;top:55.579999999999984px;width:28.6px;height:7.6px;line-height:7.6px;background:#2a8de8;font-size:5.3px;color:#fff;">销售合同</div>
<div class="t" style="top:59.379999999999995px;font-size:5.6px;color:#2b2f36;right:504.8px;letter-spacing:0.22px;">2,600.00元</div>
<div class="t" style="top:59.379999999999995px;font-size:5.6px;color:#2b2f36;left:352.2px;letter-spacing:0.4px;">2023-03-03</div>
<div class="tag" style="left:431.2px;top:55.579999999999984px;width:23px;height:7.6px;line-height:7.6px;background:#6a62de;font-size:5.3px;color:#fff;">银行卡</div>
<div class="t" style="top:59.379999999999995px;font-size:5.6px;color:#2b2f36;right:346.84000000000003px;letter-spacing:0.22px;">0</div>
<div class="t" style="top:59.379999999999995px;font-size:5.6px;color:#2b2f36;right:307.28px;letter-spacing:0.22px;">2,600.00元</div>
<div class="t" style="top:59.379999999999995px;font-size:5.6px;color:#2b2f36;right:267.72px;letter-spacing:0.22px;">0</div>
<div class="t" style="top:59.379999999999995px;font-size:5.6px;color:#2b2f36;right:228.16000000000008px;letter-spacing:0.22px;">0</div>
<div class="t" style="top:59.379999999999995px;font-size:5.6px;color:#2b2f36;right:188.5999999999999px;letter-spacing:0.22px;">2,600.00元</div>
<div class="t" style="top:59.379999999999995px;font-size:5.6px;color:#2b2f36;right:149.03999999999996px;letter-spacing:0.22px;">0</div>
<div class="t" style="top:59.379999999999995px;font-size:5.6px;color:#2b2f36;right:109.48000000000002px;letter-spacing:0.22px;">0</div>
<div class="t" style="top:59.379999999999995px;font-size:5.6px;color:#2b2f36;left:747.9200000000001px;letter-spacing:0.4px;">2023-03-02</div>
<div class="tag" style="left:787.48px;top:55.579999999999984px;width:28.6px;height:7.6px;line-height:7.6px;background:#2087e2;font-size:5.3px;color:#fff;">快递发货</div>
<div class="t" style="top:59.379999999999995px;font-size:5.6px;color:#2b2f36;left:827.0400000000002px;letter-spacing:0.27px;">4002005678</div>
<div class="t" style="top:72.44px;font-size:5.3px;color:#9aa0a8;left:-103.8px;left:-0.20000000000000284px;width:16px;text-align:center;">5</div>
<div class="t" style="top:72.44px;font-size:5.6px;color:#2b2f36;left:19.60000000000001px;letter-spacing:0.27px;">202303030307</div>
<div class="tag" style="left:74.60000000000001px;top:68.74000000000001px;width:33.6px;height:7.4px;line-height:7.4px;background:#e9ebee;color:#2b2f36;font-weight:400;font-size:5.6px;border-radius:3px;text-align:left;padding-left:2.8px">大禹文化传媒</div>
<div class="tag" style="left:114.2px;top:68.74000000000001px;width:24px;height:7.4px;line-height:7.4px;background:#e9ebee;color:#2b2f36;font-weight:400;font-size:5.3px;border-radius:4px;text-align:left;padding-left:10.8px">张盟</div>
<svg class="a" style="left:114.60000000000001px;top:68.63999999999999px" width="7.6" height="7.6" viewBox="0 0 70 70"><circle cx="35" cy="35" r="35" fill="#a5e3b0"/><circle cx="35" cy="31" r="19" fill="#f2fbf3"/><path d="M28 46 L24 62 L42 47Z" fill="#f2fbf3"/></svg>
<div class="t" style="top:72.44px;font-size:5.6px;color:#2b2f36;left:153.89999999999998px;letter-spacing:0.4px;">2022-07-13</div>
<div class="tag" style="left:193.5px;top:68.63999999999999px;width:23.2px;height:7.6px;line-height:7.6px;background:#2087e2;font-size:5.3px;color:#fff;">进行中</div>
<div class="tag" style="left:233.2px;top:68.63999999999999px;width:22.6px;height:7.6px;line-height:7.6px;background:#1fa745;font-size:5.3px;color:#fff;">已发货</div>
<div class="tag" style="left:272.7px;top:68.63999999999999px;width:28.6px;height:7.6px;line-height:7.6px;background:#1fa745;font-size:5.3px;color:#fff;">分销合同</div>
<div class="t" style="top:72.44px;font-size:5.6px;color:#2b2f36;right:504.8px;letter-spacing:0.22px;">5,800.00元</div>
<div class="t" style="top:72.44px;font-size:5.6px;color:#2b2f36;left:352.2px;letter-spacing:0.4px;">2022-07-25</div>
<div class="tag" style="left:431.2px;top:68.63999999999999px;width:23px;height:7.6px;line-height:7.6px;background:#6a62de;font-size:5.3px;color:#fff;">银行卡</div>
<div class="t" style="top:72.44px;font-size:5.6px;color:#2b2f36;right:346.84000000000003px;letter-spacing:0.22px;">0</div>
<div class="t" style="top:72.44px;font-size:5.6px;color:#2b2f36;right:307.28px;letter-spacing:0.22px;">5,800.00元</div>
<div class="t" style="top:72.44px;font-size:5.6px;color:#2b2f36;right:267.72px;letter-spacing:0.22px;">0</div>
<div class="t" style="top:72.44px;font-size:5.6px;color:#2b2f36;right:228.16000000000008px;letter-spacing:0.22px;">0</div>
<div class="t" style="top:72.44px;font-size:5.6px;color:#2b2f36;right:188.5999999999999px;letter-spacing:0.22px;">5,800.00元</div>
<div class="t" style="top:72.44px;font-size:5.6px;color:#2b2f36;right:149.03999999999996px;letter-spacing:0.22px;">0</div>
<div class="t" style="top:72.44px;font-size:5.6px;color:#2b2f36;right:109.48000000000002px;letter-spacing:0.22px;">0</div>
<div class="t" style="top:72.44px;font-size:5.6px;color:#2b2f36;left:747.9200000000001px;letter-spacing:0.4px;">2022-08-01</div>
<div class="tag" style="left:787.48px;top:68.63999999999999px;width:28.6px;height:7.6px;line-height:7.6px;background:#1fa745;font-size:5.3px;color:#fff;">客户自提</div>
<div class="t" style="top:72.44px;font-size:5.6px;color:#2b2f36;left:827.0400000000002px;letter-spacing:0.27px;">4002005678</div>
<div class="t" style="top:85.5px;font-size:5.3px;color:#9aa0a8;left:-103.8px;left:-0.20000000000000284px;width:16px;text-align:center;">6</div>
<div class="t" style="top:85.5px;font-size:5.6px;color:#2b2f36;left:19.60000000000001px;letter-spacing:0.27px;">202303030308</div>
<div class="tag" style="left:74.60000000000001px;top:81.80000000000001px;width:33.6px;height:7.4px;line-height:7.4px;background:#e9ebee;color:#2b2f36;font-weight:400;font-size:5.6px;border-radius:3px;text-align:left;padding-left:2.8px">融创房地产开</div>
<div class="tag" style="left:114.2px;top:81.80000000000001px;width:34px;height:7.4px;line-height:7.4px;background:#e9ebee;color:#2b2f36;font-weight:400;font-size:5.3px;border-radius:4px;text-align:left;padding-left:10.8px">伙伴云格</div>
<svg class="a" style="left:114.60000000000001px;top:81.69999999999999px" width="7.6" height="7.6" viewBox="0 0 70 70"><circle cx="35" cy="35" r="35" fill="#4a4a58"/><circle cx="35" cy="35" r="18" fill="#8a8898"/><circle cx="35" cy="35" r="8" fill="#c8c6d4"/></svg>
<div class="t" style="top:85.5px;font-size:5.6px;color:#2b2f36;left:153.89999999999998px;letter-spacing:0.4px;">2022-06-21</div>
<div class="tag" style="left:193.5px;top:81.69999999999999px;width:23.2px;height:7.6px;line-height:7.6px;background:#2087e2;font-size:5.3px;color:#fff;">进行中</div>
<div class="tag" style="left:233.2px;top:81.69999999999999px;width:22.6px;height:7.6px;line-height:7.6px;background:#1fa745;font-size:5.3px;color:#fff;">已发货</div>
<div class="tag" style="left:272.7px;top:81.69999999999999px;width:28.6px;height:7.6px;line-height:7.6px;background:#1fa745;font-size:5.3px;color:#fff;">分销合同</div>
<div class="t" style="top:85.5px;font-size:5.6px;color:#2b2f36;right:504.8px;letter-spacing:0.22px;">4,800.00元</div>
<div class="t" style="top:85.5px;font-size:5.6px;color:#2b2f36;left:352.2px;letter-spacing:0.4px;">2022-07-02</div>
<div class="tag" style="left:431.2px;top:81.69999999999999px;width:28.6px;height:7.6px;line-height:7.6px;background:#1fa745;font-size:5.3px;color:#fff;">微信支付</div>
<div class="t" style="top:85.5px;font-size:5.6px;color:#2b2f36;right:346.84000000000003px;letter-spacing:0.22px;">0</div>
<div class="t" style="top:85.5px;font-size:5.6px;color:#2b2f36;right:307.28px;letter-spacing:0.22px;">4,800.00元</div>
<div class="t" style="top:85.5px;font-size:5.6px;color:#2b2f36;right:267.72px;letter-spacing:0.22px;">0</div>
<div class="t" style="top:85.5px;font-size:5.6px;color:#2b2f36;right:228.16000000000008px;letter-spacing:0.22px;">0</div>
<div class="t" style="top:85.5px;font-size:5.6px;color:#2b2f36;right:188.5999999999999px;letter-spacing:0.22px;">4,800.00元</div>
<div class="t" style="top:85.5px;font-size:5.6px;color:#2b2f36;right:149.03999999999996px;letter-spacing:0.22px;">0</div>
<div class="t" style="top:85.5px;font-size:5.6px;color:#2b2f36;right:109.48000000000002px;letter-spacing:0.22px;">0</div>
<div class="t" style="top:85.5px;font-size:5.6px;color:#2b2f36;left:747.9200000000001px;letter-spacing:0.4px;">2022-07-08</div>
<div class="tag" style="left:787.48px;top:81.69999999999999px;width:28.6px;height:7.6px;line-height:7.6px;background:#1fa745;font-size:5.3px;color:#fff;">客户自提</div>
<div class="t" style="top:85.5px;font-size:5.6px;color:#2b2f36;left:827.0400000000002px;letter-spacing:0.27px;">4002005678</div>
<div class="t" style="top:98.56px;font-size:5.3px;color:#9aa0a8;left:-103.8px;left:-0.20000000000000284px;width:16px;text-align:center;">7</div>
<div class="t" style="top:98.56px;font-size:5.6px;color:#2b2f36;left:19.60000000000001px;letter-spacing:0.27px;">202303030309</div>
<div class="tag" style="left:74.60000000000001px;top:94.86000000000001px;width:33.6px;height:7.4px;line-height:7.4px;background:#e9ebee;color:#2b2f36;font-weight:400;font-size:5.6px;border-radius:3px;text-align:left;padding-left:2.8px">星际科技有限</div>
<div class="tag" style="left:114.2px;top:94.86000000000001px;width:29px;height:7.4px;line-height:7.4px;background:#e9ebee;color:#2b2f36;font-weight:400;font-size:5.3px;border-radius:4px;text-align:left;padding-left:10.8px">晁元达</div>
<svg class="a" style="left:114.60000000000001px;top:94.75999999999999px" width="7.6" height="7.6" viewBox="0 0 70 70"><circle cx="35" cy="35" r="35" fill="#8a6238"/><circle cx="35" cy="30" r="14" fill="#d9a066"/><path d="M8 58 C14 44 56 44 62 58 C54 68 16 68 8 58Z" fill="#4a3420"/></svg>
<div class="t" style="top:98.56px;font-size:5.6px;color:#2b2f36;left:153.89999999999998px;letter-spacing:0.4px;">2022-06-03</div>
<div class="tag" style="left:193.5px;top:94.75999999999999px;width:23.2px;height:7.6px;line-height:7.6px;background:#2087e2;font-size:5.3px;color:#fff;">进行中</div>
<div class="tag" style="left:233.2px;top:94.75999999999999px;width:22.6px;height:7.6px;line-height:7.6px;background:#1fa745;font-size:5.3px;color:#fff;">已发货</div>
<div class="tag" style="left:272.7px;top:94.75999999999999px;width:28.6px;height:7.6px;line-height:7.6px;background:#2a8de8;font-size:5.3px;color:#fff;">销售合同</div>
<div class="t" style="top:98.56px;font-size:5.6px;color:#2b2f36;right:504.8px;letter-spacing:0.22px;">3,200.00元</div>
<div class="t" style="top:98.56px;font-size:5.6px;color:#2b2f36;left:352.2px;letter-spacing:0.4px;">2022-06-10</div>
<div class="tag" style="left:431.2px;top:94.75999999999999px;width:23px;height:7.6px;line-height:7.6px;background:#f8ba37;font-size:5.3px;color:#fff;">信用卡</div>
<div class="t" style="top:98.56px;font-size:5.6px;color:#2b2f36;right:346.84000000000003px;letter-spacing:0.22px;">0</div>
<div class="t" style="top:98.56px;font-size:5.6px;color:#2b2f36;right:307.28px;letter-spacing:0.22px;">3,200.00元</div>
<div class="t" style="top:98.56px;font-size:5.6px;color:#2b2f36;right:267.72px;letter-spacing:0.22px;">0</div>
<div class="t" style="top:98.56px;font-size:5.6px;color:#2b2f36;right:228.16000000000008px;letter-spacing:0.22px;">0</div>
<div class="t" style="top:98.56px;font-size:5.6px;color:#2b2f36;right:188.5999999999999px;letter-spacing:0.22px;">3,200.00元</div>
<div class="t" style="top:98.56px;font-size:5.6px;color:#2b2f36;right:149.03999999999996px;letter-spacing:0.22px;">0</div>
<div class="t" style="top:98.56px;font-size:5.6px;color:#2b2f36;right:109.48000000000002px;letter-spacing:0.22px;">0</div>
<div class="t" style="top:98.56px;font-size:5.6px;color:#2b2f36;left:747.9200000000001px;letter-spacing:0.4px;">2022-06-16</div>
<div class="tag" style="left:787.48px;top:94.75999999999999px;width:28.6px;height:7.6px;line-height:7.6px;background:#2087e2;font-size:5.3px;color:#fff;">快递发货</div>
<div class="t" style="top:98.56px;font-size:5.6px;color:#2b2f36;left:827.0400000000002px;letter-spacing:0.27px;">4002005678</div>
<div class="t" style="top:111.62px;font-size:5.3px;color:#9aa0a8;left:-103.8px;left:-0.20000000000000284px;width:16px;text-align:center;">8</div>
<div class="t" style="top:111.62px;font-size:5.6px;color:#2b2f36;left:19.60000000000001px;letter-spacing:0.27px;">202303030310</div>
<div class="tag" style="left:74.60000000000001px;top:107.92000000000002px;width:33.6px;height:7.4px;line-height:7.4px;background:#e9ebee;color:#2b2f36;font-weight:400;font-size:5.6px;border-radius:3px;text-align:left;padding-left:2.8px">宜居生态园林</div>
<div class="tag" style="left:114.2px;top:107.92000000000002px;width:34px;height:7.4px;line-height:7.4px;background:#e9ebee;color:#2b2f36;font-weight:400;font-size:5.3px;border-radius:4px;text-align:left;padding-left:10.8px">伙伴云格</div>
<svg class="a" style="left:114.60000000000001px;top:107.82px" width="7.6" height="7.6" viewBox="0 0 70 70"><circle cx="35" cy="35" r="35" fill="#4a4a58"/><circle cx="35" cy="35" r="18" fill="#8a8898"/><circle cx="35" cy="35" r="8" fill="#c8c6d4"/></svg>
<div class="t" style="top:111.62px;font-size:5.6px;color:#2b2f36;left:153.89999999999998px;letter-spacing:0.4px;">2022-05-01</div>
<div class="tag" style="left:193.5px;top:107.82px;width:23.2px;height:7.6px;line-height:7.6px;background:#2087e2;font-size:5.3px;color:#fff;">进行中</div>
<div class="tag" style="left:233.2px;top:107.82px;width:22.6px;height:7.6px;line-height:7.6px;background:#1fa745;font-size:5.3px;color:#fff;">已发货</div>
<div class="tag" style="left:272.7px;top:107.82px;width:28.6px;height:7.6px;line-height:7.6px;background:#2a8de8;font-size:5.3px;color:#fff;">销售合同</div>
<div class="t" style="top:111.62px;font-size:5.6px;color:#2b2f36;right:504.8px;letter-spacing:0.22px;">10,200.00元</div>
<div class="t" style="top:111.62px;font-size:5.6px;color:#2b2f36;left:352.2px;letter-spacing:0.4px;">2022-05-08</div>
<div class="tag" style="left:431.2px;top:107.82px;width:23px;height:7.6px;line-height:7.6px;background:#6a62de;font-size:5.3px;color:#fff;">银行卡</div>
<div class="t" style="top:111.62px;font-size:5.6px;color:#2b2f36;right:346.84000000000003px;letter-spacing:0.22px;">0</div>
<div class="t" style="top:111.62px;font-size:5.6px;color:#2b2f36;right:307.28px;letter-spacing:0.22px;">10,200.00元</div>
<div class="t" style="top:111.62px;font-size:5.6px;color:#2b2f36;right:267.72px;letter-spacing:0.22px;">0</div>
<div class="t" style="top:111.62px;font-size:5.6px;color:#2b2f36;right:228.16000000000008px;letter-spacing:0.22px;">0</div>
<div class="t" style="top:111.62px;font-size:5.6px;color:#2b2f36;right:188.5999999999999px;letter-spacing:0.22px;">10,200.00元</div>
<div class="t" style="top:111.62px;font-size:5.6px;color:#2b2f36;right:149.03999999999996px;letter-spacing:0.22px;">0</div>
<div class="t" style="top:111.62px;font-size:5.6px;color:#2b2f36;right:109.48000000000002px;letter-spacing:0.22px;">0</div>
<div class="t" style="top:111.62px;font-size:5.6px;color:#2b2f36;left:747.9200000000001px;letter-spacing:0.4px;">2022-05-11</div>
<div class="tag" style="left:787.48px;top:107.82px;width:28.6px;height:7.6px;line-height:7.6px;background:#1fa745;font-size:5.3px;color:#fff;">客户自提</div>
<div class="t" style="top:111.62px;font-size:5.6px;color:#2b2f36;left:827.0400000000002px;letter-spacing:0.27px;">4002005678</div>
<div class="t" style="top:124.68px;font-size:5.3px;color:#9aa0a8;left:-103.8px;left:-0.20000000000000284px;width:16px;text-align:center;">9</div>
<div class="t" style="top:124.68px;font-size:5.6px;color:#2b2f36;left:19.60000000000001px;letter-spacing:0.27px;">202303030311</div>
<div class="tag" style="left:74.60000000000001px;top:120.98000000000002px;width:33.6px;height:7.4px;line-height:7.4px;background:#e9ebee;color:#2b2f36;font-weight:400;font-size:5.6px;border-radius:3px;text-align:left;padding-left:2.8px">宜居生态园林</div>
<div class="tag" style="left:114.2px;top:120.98000000000002px;width:29px;height:7.4px;line-height:7.4px;background:#e9ebee;color:#2b2f36;font-weight:400;font-size:5.3px;border-radius:4px;text-align:left;padding-left:10.8px">胡馨琳</div>
<svg class="a" style="left:114.60000000000001px;top:120.88px" width="7.6" height="7.6" viewBox="0 0 70 70"><circle cx="35" cy="35" r="35" fill="#5ed39a"/><rect x="17" y="17" width="36" height="36" rx="10" fill="#d4f5e3"/></svg>
<div class="t" style="top:124.68px;font-size:5.6px;color:#2b2f36;left:153.89999999999998px;letter-spacing:0.4px;">2022-09-12</div>
<div class="tag" style="left:193.5px;top:120.88px;width:23.2px;height:7.6px;line-height:7.6px;background:#2087e2;font-size:5.3px;color:#fff;">进行中</div>
<div class="tag" style="left:233.2px;top:120.88px;width:22.6px;height:7.6px;line-height:7.6px;background:#1fa745;font-size:5.3px;color:#fff;">已发货</div>
<div class="tag" style="left:272.7px;top:120.88px;width:28.6px;height:7.6px;line-height:7.6px;background:#2a8de8;font-size:5.3px;color:#fff;">销售合同</div>
<div class="t" style="top:124.68px;font-size:5.6px;color:#2b2f36;right:504.8px;letter-spacing:0.22px;">4,400.00元</div>
<div class="t" style="top:124.68px;font-size:5.6px;color:#2b2f36;left:352.2px;letter-spacing:0.4px;">2022-09-21</div>
<div class="tag" style="left:431.2px;top:120.88px;width:23px;height:7.6px;line-height:7.6px;background:#6a62de;font-size:5.3px;color:#fff;">银行卡</div>
<div class="t" style="top:124.68px;font-size:5.6px;color:#2b2f36;right:346.84000000000003px;letter-spacing:0.22px;">0</div>
<div class="t" style="top:124.68px;font-size:5.6px;color:#2b2f36;right:307.28px;letter-spacing:0.22px;">4,400.00元</div>
<div class="t" style="top:124.68px;font-size:5.6px;color:#2b2f36;right:267.72px;letter-spacing:0.22px;">0</div>
<div class="t" style="top:124.68px;font-size:5.6px;color:#2b2f36;right:228.16000000000008px;letter-spacing:0.22px;">0</div>
<div class="t" style="top:124.68px;font-size:5.6px;color:#2b2f36;right:188.5999999999999px;letter-spacing:0.22px;">4,400.00元</div>
<div class="t" style="top:124.68px;font-size:5.6px;color:#2b2f36;right:149.03999999999996px;letter-spacing:0.22px;">0</div>
<div class="t" style="top:124.68px;font-size:5.6px;color:#2b2f36;right:109.48000000000002px;letter-spacing:0.22px;">0</div>
<div class="t" style="top:124.68px;font-size:5.6px;color:#2b2f36;left:747.9200000000001px;letter-spacing:0.4px;">2022-09-22</div>
<div class="tag" style="left:787.48px;top:120.88px;width:28.6px;height:7.6px;line-height:7.6px;background:#1fa745;font-size:5.3px;color:#fff;">客户自提</div>
<div class="t" style="top:124.68px;font-size:5.6px;color:#2b2f36;left:827.0400000000002px;letter-spacing:0.27px;">4002005678</div>
<div class="t" style="top:137.74px;font-size:5.3px;color:#9aa0a8;left:-103.8px;left:-0.20000000000000284px;width:16px;text-align:center;">10</div>
<div class="t" style="top:137.74px;font-size:5.6px;color:#2b2f36;left:19.60000000000001px;letter-spacing:0.27px;">202303030312</div>
<div class="tag" style="left:74.60000000000001px;top:134.04000000000002px;width:33.6px;height:7.4px;line-height:7.4px;background:#e9ebee;color:#2b2f36;font-weight:400;font-size:5.6px;border-radius:3px;text-align:left;padding-left:2.8px">融创房地产开</div>
<div class="tag" style="left:114.2px;top:134.04000000000002px;width:24px;height:7.4px;line-height:7.4px;background:#e9ebee;color:#2b2f36;font-weight:400;font-size:5.3px;border-radius:4px;text-align:left;padding-left:10.8px">张盟</div>
<svg class="a" style="left:114.60000000000001px;top:133.94px" width="7.6" height="7.6" viewBox="0 0 70 70"><circle cx="35" cy="35" r="35" fill="#a5e3b0"/><circle cx="35" cy="31" r="19" fill="#f2fbf3"/><path d="M28 46 L24 62 L42 47Z" fill="#f2fbf3"/></svg>
<div class="t" style="top:137.74px;font-size:5.6px;color:#2b2f36;left:153.89999999999998px;letter-spacing:0.4px;">2022-01-21</div>
<div class="tag" style="left:193.5px;top:133.94px;width:23.2px;height:7.6px;line-height:7.6px;background:#2087e2;font-size:5.3px;color:#fff;">进行中</div>
<div class="tag" style="left:233.2px;top:133.94px;width:22.6px;height:7.6px;line-height:7.6px;background:#1fa745;font-size:5.3px;color:#fff;">已发货</div>
<div class="tag" style="left:272.7px;top:133.94px;width:28.6px;height:7.6px;line-height:7.6px;background:#1fa745;font-size:5.3px;color:#fff;">分销合同</div>
<div class="t" style="top:137.74px;font-size:5.6px;color:#2b2f36;right:504.8px;letter-spacing:0.22px;">4,700.00元</div>
<div class="t" style="top:137.74px;font-size:5.6px;color:#2b2f36;left:352.2px;letter-spacing:0.4px;">2022-02-04</div>
<div class="tag" style="left:431.2px;top:133.94px;width:28.6px;height:7.6px;line-height:7.6px;background:#1fa745;font-size:5.3px;color:#fff;">微信支付</div>
<div class="t" style="top:137.74px;font-size:5.6px;color:#2b2f36;right:346.84000000000003px;letter-spacing:0.22px;">4,700.00元</div>
<div class="t" style="top:137.74px;font-size:5.6px;color:#2b2f36;right:307.28px;letter-spacing:0.22px;">0</div>
<div class="t" style="top:137.74px;font-size:5.6px;color:#2b2f36;right:267.72px;letter-spacing:0.22px;">100.0%</div>
<div class="t" style="top:137.74px;font-size:5.6px;color:#2b2f36;right:228.16000000000008px;letter-spacing:0.22px;">0</div>
<div class="t" style="top:137.74px;font-size:5.6px;color:#2b2f36;right:188.5999999999999px;letter-spacing:0.22px;">4,700.00元</div>
<div class="t" style="top:137.74px;font-size:5.6px;color:#2b2f36;right:149.03999999999996px;letter-spacing:0.22px;">0</div>
<div class="t" style="top:137.74px;font-size:5.6px;color:#2b2f36;right:109.48000000000002px;letter-spacing:0.22px;">0</div>
<div class="t" style="top:137.74px;font-size:5.6px;color:#2b2f36;left:747.9200000000001px;letter-spacing:0.4px;">2022-02-08</div>
<div class="tag" style="left:787.48px;top:133.94px;width:28.6px;height:7.6px;line-height:7.6px;background:#2087e2;font-size:5.3px;color:#fff;">快递发货</div>
<div class="t" style="top:137.74px;font-size:5.6px;color:#2b2f36;left:827.0400000000002px;letter-spacing:0.27px;">4002005678</div>
</div>
<svg class="a" style="left:110.8px;top:433.8px" width="2.2" height="3.8" viewBox="0 0 22 38"><path d="M18 3 L5 19 L18 35" stroke="#b4b9c0" stroke-width="5" fill="none"/></svg>
<div class="a" style="left:117.6px;top:431.7px;width:8px;height:8px;background:#e3f0fc;border-radius:1.5px"></div>
<div class="t" style="top:435.8px;font-size:5.3px;color:#1e7fd8;left:0px;font-weight:700;left:111.6px;width:20px;text-align:center;">1</div>
<div class="t" style="top:435.8px;font-size:5.3px;color:#5a5f68;left:0px;left:121.4px;width:20px;text-align:center;">2</div>
<div class="t" style="top:435.8px;font-size:5.3px;color:#5a5f68;left:0px;left:131.3px;width:20px;text-align:center;">3</div>
<div class="t" style="top:435.8px;font-size:5.3px;color:#5a5f68;left:0px;left:141.2px;width:20px;text-align:center;">4</div>
<div class="t" style="top:435.8px;font-size:5.3px;color:#5a5f68;left:0px;left:151px;width:20px;text-align:center;">5</div>
<div class="t" style="top:435.8px;font-size:5.3px;color:#9aa0a8;left:0px;left:162.2px;width:20px;text-align:center;">···</div>
<div class="t" style="top:435.8px;font-size:5.3px;color:#5a5f68;left:0px;left:174.3px;width:20px;text-align:center;">11</div>
<svg class="a" style="left:193.8px;top:433.8px" width="2.2" height="3.8" viewBox="0 0 22 38"><path d="M4 3 L17 19 L4 35" stroke="#5a5f68" stroke-width="5" fill="none"/></svg>
<div class="card" style="left:103.8px;top:450.1px;width:850.2px;height:30px;border-radius:2px 2px 0 0"></div>
<div class="t" style="top:459.3px;font-size:6.3px;color:#23272e;left:110.3px;font-weight:700;">客户列表</div>
<div class="t" style="top:459.4px;font-size:5.3px;color:#a0a5ad;left:138.6px;letter-spacing:0.35px;">共 11 条</div>
<div class="a" style="left:103.8px;top:468.4px;width:850.2px;height:3px;background:#f5f6f8;"></div>
<div class="a" style="left:119.15px;top:468.4px;width:0.5px;height:3px;background:#eceef1;"></div>
<div class="a" style="left:174.95px;top:468.4px;width:0.5px;height:3px;background:#eceef1;"></div>
<div class="a" style="left:214.75px;top:468.4px;width:0.5px;height:3px;background:#eceef1;"></div>
<div class="a" style="left:254.35px;top:468.4px;width:0.5px;height:3px;background:#eceef1;"></div>
<div class="a" style="left:293.95px;top:468.4px;width:0.5px;height:3px;background:#eceef1;"></div>
</div></div></body></html>
